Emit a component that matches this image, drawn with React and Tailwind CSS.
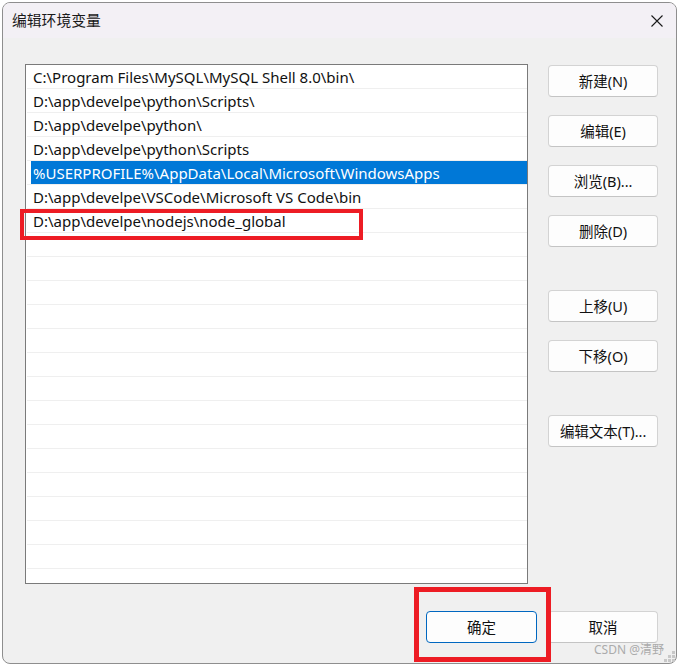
import React from "react";

const paths = [
  "C:\\Program Files\\MySQL\\MySQL Shell 8.0\\bin\\",
  "D:\\app\\develpe\\python\\Scripts\\",
  "D:\\app\\develpe\\python\\",
  "D:\\app\\develpe\\python\\Scripts",
  "%USERPROFILE%\\AppData\\Local\\Microsoft\\WindowsApps",
  "D:\\app\\develpe\\VSCode\\Microsoft VS Code\\bin",
  "D:\\app\\develpe\\nodejs\\node_global",
];

const font = { fontFamily: '"Noto Sans", "Noto Sans CJK SC", sans-serif' };

const Btn = ({ children, primary, className = "" }) => (
  <button
    className={`h-[32px] rounded-[4px] border bg-[#fdfdfd] text-[14.5px] text-[#111] leading-none ${
      primary ? "border-[#0067c0]" : "border-[#d3d3d3] border-b-[#c4c4c4]"
    } ${className}`}
    style={font}
  >
    {children}
  </button>
);

export default function App() {
  const rows = Array.from({ length: 22 }, (_, i) => paths[i] || "");
  return (
    <div className="relative w-[678px] h-[665px] bg-white pl-[2px] pt-[2px] pr-[1px] pb-[1px]" style={font}>
      <div className="flex flex-col w-full h-full border border-[#8e8e8e] rounded-[8px] overflow-hidden bg-[#f0f0f0]">
        <div className="flex items-center justify-between h-[35px] bg-[#f3f0f5] pl-[9px] pr-[13px] shrink-0">
          <span className="text-[14.8px] text-[#1a1a1a]" style={{ fontFamily: '"Noto Sans CJK SC", sans-serif' }}>
            编辑环境变量
          </span>
          <svg width="12" height="12" viewBox="0 0 12 12" className="mt-[1px]">
            <path d="M0.5 0.5 L11.5 11.5 M11.5 0.5 L0.5 11.5" stroke="#1a1a1a" strokeWidth="1.1" />
          </svg>
        </div>
        <div className="flex flex-col flex-1 pl-[22px] pr-[18px] pt-[26px]">
          <div className="flex gap-[20px]">
            <div className="w-[504px] h-[520px] border border-[#7a7a7a] bg-white overflow-hidden">
              {rows.map((p, i) => (
                <div key={i} className="ml-[1px] h-[24px] border-b border-[#efefef]">
                  <div
                    className={`ml-[4px] h-[23px] pl-[2px] pt-[2px] flex items-center text-[15px] whitespace-nowrap ${
                      i === 4 ? "bg-[#0078d7] text-white" : "text-[#111]"
                    }`}
                  >
                    {p}
                  </div>
                </div>
              ))}
            </div>
            <div className="flex flex-col w-[110px] pt-[1px]">
              <Btn>新建(N)</Btn>
              <Btn className="mt-[18px]">编辑(E)</Btn>
              <Btn className="mt-[18px]">浏览(B)...</Btn>
              <Btn className="mt-[18px]">删除(D)</Btn>
              <Btn className="mt-[43px]">上移(U)</Btn>
              <Btn className="mt-[18px]">下移(O)</Btn>
              <Btn className="mt-[43px]">编辑文本(T)...</Btn>
            </div>
          </div>
          <div className="flex justify-end gap-[11px] mt-[27px]">
            <Btn primary className="w-[111px]">确定</Btn>
            <Btn className="w-[110px]">取消</Btn>
          </div>
        </div>
      </div>
      <div className="absolute left-[20px] top-[209px] w-[343px] h-[31px] border-[4px] border-[#ed1c24]" />
      <div className="absolute left-[414px] top-[587px] w-[137px] h-[75px] border-[5px] border-[#ed1c24]" />
      <div className="absolute left-[594px] top-[641px] text-[12px] text-[#ababab]">CSDN @清野</div>
      <div className="absolute left-[664px] top-[651px] grid grid-cols-3 gap-[1px]">
        {[0, 0, 1, 0, 1, 1, 1, 1, 1].map((v, i) => (
          <div key={i} className={`w-[3px] h-[3px] ${v ? "bg-[#c8c8c8]" : ""}`} />
        ))}
      </div>
    </div>
  );
}
